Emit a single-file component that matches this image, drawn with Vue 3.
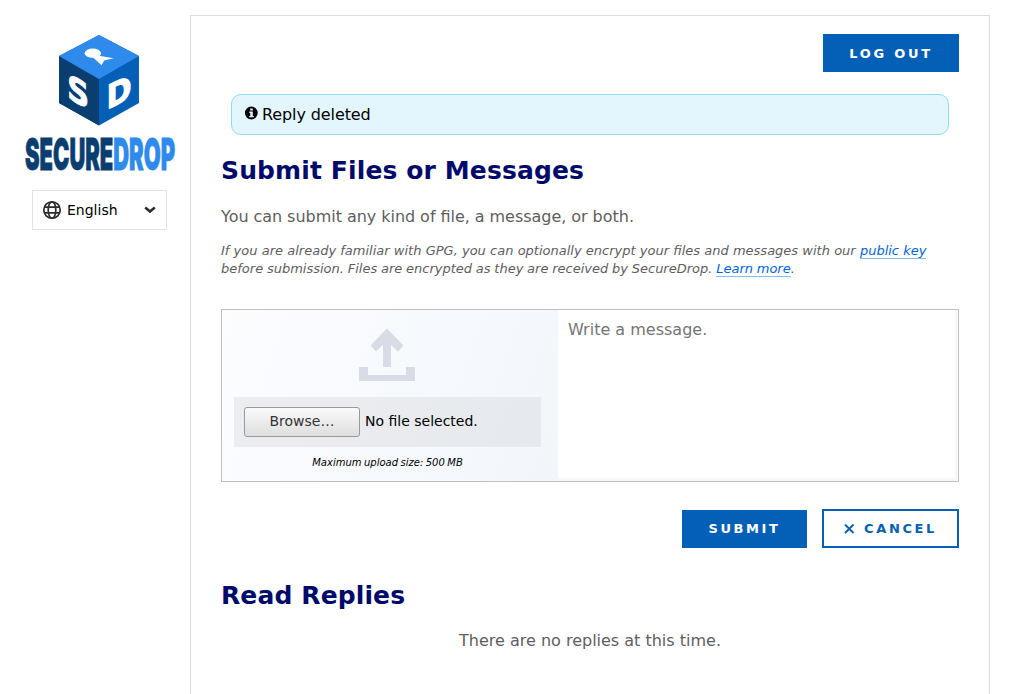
<script setup>
import { ref } from 'vue'

const message = ref('')
</script>

<template>
  <div class="page">
    <aside class="sidebar">
      <svg class="logo" width="160" height="150" viewBox="20 33 160 150" role="img" aria-label="SecureDrop">
        <path d="M99 35 L139 56 V103 L99 125.500 L59 103 V56 Z" fill="#045fb6" />
        <path d="M59 56 L99 79 V125.500 L59 103 Z" fill="#0a3e71" />
        <path d="M99 35 L139 56 L99 79 L59 56 Z" fill="#2e8aeb" />
        <ellipse cx="92.800" cy="53.200" rx="8.200" ry="4.600" fill="#fff" />
        <path d="M97.500 53 L100.500 56 L113.700 58.300 L104.200 60.500 L101.500 65.300 L92.500 57 Z" fill="#fff" />
        <text class="face" transform="matrix(.89 .5 0 1 67.300 97.500)" font-size="34">S</text>
        <text class="face" transform="matrix(.92 -.43 0 1 106.500 109.700)" font-size="33">D</text>
        <text class="word" transform="translate(25 169.600) scale(.452 1)" font-size="44" textLength="332" lengthAdjust="spacingAndGlyphs"><tspan class="secure">SECURE</tspan><tspan class="drop">DROP</tspan></text>
      </svg>
      <button class="language" type="button">
        <svg width="20" height="20" viewBox="0 0 20 20" fill="none" stroke="#2d2d2d" stroke-width="1.700">
          <circle cx="10" cy="10" r="8.200" />
          <ellipse cx="10" cy="10" rx="3.800" ry="8.200" />
          <path d="M2.500 7.200 H17.500 M2.500 12.800 H17.500" />
        </svg>
        <span>English</span>
        <svg class="chevron" width="12" height="8" viewBox="0 0 12 8" fill="none" stroke="#2d2d2d" stroke-width="2.600">
          <path d="M1.200 1.500 L6 5.500 L10.800 1.500" />
        </svg>
      </button>
    </aside>

    <main class="panel">
      <div class="top"><button class="btn logout" type="button">LOG OUT</button></div>
      <div class="flash">
        <svg width="13" height="13" viewBox="0 0 13 13">
          <circle cx="6.300" cy="6" r="6.400" fill="#000" />
          <path d="M5.200 1.600 H7.800 V3.600 H5.200 Z M4.300 4.600 H7.800 V8.900 H8.800 V10.300 H4.200 V8.900 H5.300 V5.900 H4.300 Z" fill="#e3f6fd" />
        </svg>
        <span>Reply deleted</span>
      </div>
      <h1>Submit Files or Messages</h1>
      <p class="lead">You can submit any kind of file, a message, or both.</p>
      <p class="hint"><span class="first">If you are already familiar with GPG, you can optionally encrypt your files and messages with our <a href="#">public key</a></span><br><span class="second">before submission. Files are encrypted as they are received by SecureDrop. <a href="#">Learn more</a>.</span></p>

      <section class="compose">
        <div class="upload">
          <svg class="arrow" width="56" height="53" viewBox="0 0 56 53" fill="#d9dce6">
            <path d="M28 -0.500 L44.500 16.500 L39 22.500 L32 15.800 V38 H24 V15.800 L17 22.500 L11.500 16.500 Z" />
            <path d="M0 38 H9 V46 H47 V38 H56 V52 H0 Z" />
          </svg>
          <div class="file">
            <button class="browse" type="button">Browse…</button>
            <span>No file selected.</span>
          </div>
          <div class="max">Maximum upload size: 500 MB</div>
        </div>
        <textarea v-model="message" placeholder="Write a message."></textarea>
      </section>

      <div class="actions">
        <button class="btn submit" type="button">SUBMIT</button>
        <button class="btn cancel" type="button">
          <svg width="11" height="10" viewBox="0 0 11 10" stroke="#045fb6" stroke-width="1.900"><path d="M1 0.500 L9.500 9 M9.500 0.500 L1 9" /></svg>
          <span>CANCEL</span>
        </button>
      </div>
      <h1 class="replies">Read Replies</h1>
      <p class="empty">There are no replies at this time.</p>
    </main>
  </div>
</template>

<style>
body {
  background: #fff;
  overflow: hidden;
}
</style>

<style scoped>
* {
  box-sizing: border-box;
}
.page {
  display: flex;
  width: 1011px;
  height: 694px;
  overflow: hidden;
  font-family: "DejaVu Sans", sans-serif;
  color: #5e5e5e;
}
.sidebar {
  width: 190px;
  flex: none;
  padding: 33px 0 0 20px;
}
.logo {
  display: block;
  overflow: visible;
}
.face {
  font-family: "DejaVu Sans", sans-serif;
  font-weight: bold;
  fill: #fff;
  stroke: #fff;
  stroke-width: 1;
}
.word {
  font-family: Inter, sans-serif;
  font-weight: 900;
  stroke-width: 0.8;
}
.secure {
  fill: #0a3e71;
  stroke: #0a3e71;
}
.drop {
  fill: #2e8aeb;
  stroke: #2e8aeb;
}
button {
  font-family: inherit;
  margin: 0;
}
.language {
  display: flex;
  align-items: center;
  width: 135px;
  height: 40px;
  margin: 7px 0 0 12px;
  padding: 0 10px 0 9px;
  border: 1px solid #e3e4e6;
  background: #fff;
  font-size: 14px;
  color: #000;
}
.language span {
  margin-left: 5px;
}
.chevron {
  margin-left: auto;
}
.panel {
  width: 800px;
  height: 700px;
  flex: none;
  margin-top: 15px;
  padding: 18px 30px 0;
  border: 1px solid #ddd;
}
.top,
.actions {
  display: flex;
  justify-content: flex-end;
}
.btn {
  height: 38px;
  padding: 0;
  border: 0;
  background: #045fb6;
  color: #fff;
  font-size: 13px;
  font-weight: bold;
  letter-spacing: 2.6px;
}
.logout {
  width: 136px;
  letter-spacing: 2.7px;
}
.flash {
  display: flex;
  height: 41px;
  margin: 22px 10px 0;
  padding: 12px 13px;
  border: 1px solid #8fdaf2;
  border-radius: 10px;
  background: #e3f6fd;
  color: #000;
  font-size: 16px;
  line-height: 16px;
}
.flash svg {
  overflow: visible;
}
.flash span {
  margin-left: 4px;
  letter-spacing: -0.1px;
}
h1 {
  margin: 21px 0 0;
  color: #000a6b;
  font-size: 25px;
  letter-spacing: 0.12px;
  line-height: 30px;
}
.lead {
  margin: 21px 0 0;
  font-size: 16px;
  line-height: 19px;
  word-spacing: -0.2px;
}
.hint {
  margin: 16px 0 0;
  font-size: 13px;
  font-style: italic;
  line-height: 18px;
  white-space: nowrap;
}
.first {
  word-spacing: 0.08px;
}
.second {
  word-spacing: -0.36px;
}
.hint a {
  color: #0065db;
  text-decoration: none;
  border-bottom: 1px solid #86bdf5;
}
.compose {
  display: flex;
  height: 173px;
  margin-top: 31px;
  border: 1px solid #bfbfbf;
  background: #f7f7f7;
}
.upload {
  flex: none;
  display: flex;
  flex-direction: column;
  width: 336px;
  padding: 19px 17px 0 12px;
  background: linear-gradient(110deg, #fcfdff, #f2f6fb);
}
.arrow {
  margin-left: 125px;
  overflow: visible;
}
.file {
  display: flex;
  align-items: center;
  height: 50px;
  margin-top: 15px;
  padding-left: 10px;
  background: linear-gradient(110deg, #ecedf0, #e6e9ed);
  color: #000;
  font-size: 14px;
}
.file span {
  padding-bottom: 2px;
}
.browse {
  width: 116px;
  height: 30px;
  margin-right: 5px;
  padding: 0 0 2px;
  border: 1px solid #999;
  border-radius: 3px;
  background: linear-gradient(#fafafa, #dedede);
  color: #333;
  font-size: 14px;
}
.max {
  margin-top: 9px;
  color: #000;
  font-size: 10px;
  font-style: italic;
  line-height: 14px;
  text-align: center;
  word-spacing: -0.7px;
}
textarea {
  width: 397px;
  height: 168px;
  padding: 10px;
  border: 0;
  background: #fff;
  font: 16px/19px "DejaVu Sans", sans-serif;
  resize: none;
}
textarea::placeholder {
  color: #757575;
}
.actions {
  align-items: flex-end;
  gap: 15px;
  margin-top: 27px;
}
.submit {
  width: 125px;
  padding-bottom: 2px;
}
.cancel {
  display: flex;
  align-items: center;
  justify-content: center;
  width: 137px;
  height: 39px;
  border: 2px solid #045fb6;
  background: #fff;
  color: #045fb6;
}
.cancel span {
  margin-left: 9px;
}
.replies {
  margin-top: 33px;
}
.empty {
  margin: 20px 0 0;
  font-size: 16px;
  line-height: 19px;
  text-align: center;
}
</style>
